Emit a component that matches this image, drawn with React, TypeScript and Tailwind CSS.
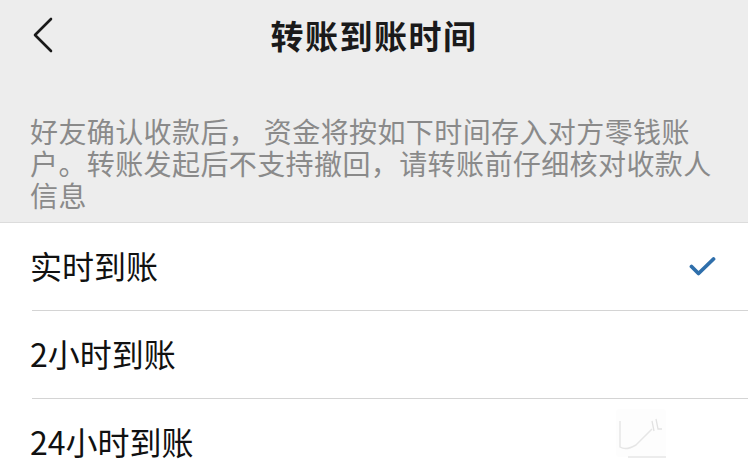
import React from "react";

const font = '"Noto Sans CJK SC", "Noto Sans", sans-serif';

function BackChevron() {
  return (
    <svg width="22" height="36" viewBox="0 0 22 36" fill="none">
      <path d="M19 2 L3 18 L19 34" stroke="#1a1a1a" strokeWidth="2.6" strokeLinecap="round" strokeLinejoin="round" />
    </svg>
  );
}

function Check() {
  return (
    <svg width="27" height="21" viewBox="0 0 27 21" fill="none">
      <path d="M2.5 10.5 L9.5 17.5 L24.5 3" stroke="#2f6fab" strokeWidth="3.8" strokeLinecap="round" strokeLinejoin="round" />
    </svg>
  );
}

function Watermark() {
  return (
    <svg width="56" height="56" viewBox="0 0 56 56" fill="none">
      <rect x="2" y="2" width="50" height="48" rx="3" fill="#fdfdfd" />
      <path d="M6 14 L6 40 Q12 44 22 38 L38 22" stroke="#e6e6e6" strokeWidth="1.5" fill="none" />
      <path d="M38 14 L40 24 M42 12 L44 22 L48 22" stroke="#e2e2e2" strokeWidth="1.3" fill="none" />
      <path d="M14 50 L52 50" stroke="#e6e6e6" strokeWidth="1.5" />
    </svg>
  );
}

const rows = [
  { label: "实时到账", checked: true },
  { label: "2小时到账", checked: false },
  { label: "24小时到账", checked: false },
];

export default function App() {
  return (
    <div className="w-[748px] h-[467px] overflow-hidden bg-white flex flex-col" style={{ fontFamily: font }}>
      <div className="bg-[#ededed] flex flex-col border-b border-[#dcdcdc]">
        <div className="relative h-[72px] flex items-center justify-center">
          <div className="absolute left-[32px] top-[17px]">
            <BackChevron />
          </div>
          <h1 className="text-[33px] font-bold text-[#1a1a1a] tracking-[1.5px] leading-none -mt-[2px]">转账到账时间</h1>
        </div>
        <p className="px-[30px] pt-[43px] pb-[5px] text-[28px] leading-[32px] tracking-[0.4px] text-[#8a8a8a] h-[150px]">
          好友确认收款后， 资金将按如下时间存入对方零钱账户。转账发起后不支持撤回，请转账前仔细核对收款人信息
        </p>
      </div>
      <div className="flex flex-col relative">
        {rows.map((r, i) => (
          <div key={r.label} className="flex flex-col">
            <div className="h-[87px] flex items-center justify-between pl-[30px] pr-[32px]">
              <span className="text-[32px] text-[#111] leading-none -mt-[3px]">{r.label}</span>
              {r.checked && <Check />}
            </div>
            {i < rows.length - 1 && <div className="ml-[32px] h-px bg-[#d4d4d4]" />}
          </div>
        ))}
        <div className="absolute left-[614px] top-[184px]">
          <Watermark />
        </div>
      </div>
    </div>
  );
}
